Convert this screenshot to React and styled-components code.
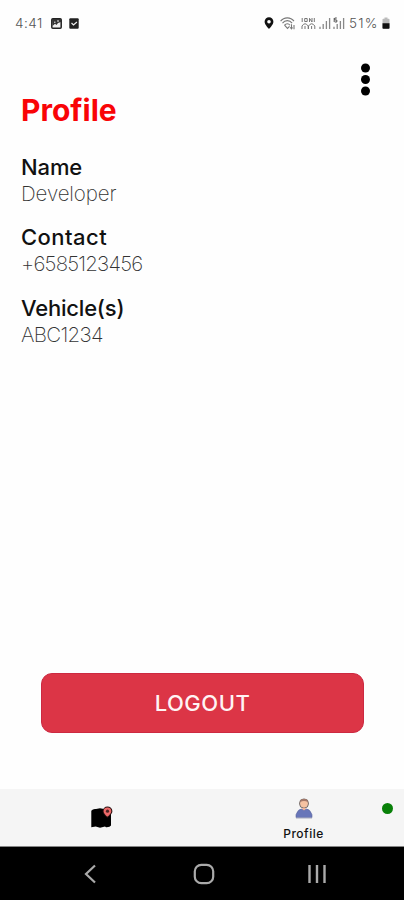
import React from "react";
import styled, { createGlobalStyle } from "styled-components";

const GlobalStyle = createGlobalStyle`
  * { box-sizing: border-box; }
  body { margin: 0; background: #fff; }
`;

const Screen = styled.div`
  width: 404px;
  height: 900px;
  display: flex;
  flex-direction: column;
  overflow: hidden;
  background: #fefefe;
  font-family: Inter, Roboto, sans-serif;
  color: #111;
`;

const StatusBar = styled.header`
  height: 46px;
  flex: none;
  display: flex;
  align-items: center;
  justify-content: space-between;
  padding: 0 14px 0 15px;
  font-size: 13.5px;
  font-weight: 300;
  color: #555;
`;

const StatusGroup = styled.div`
  display: flex;
  align-items: center;
`;

const StatusText = styled.span`
  width: ${(p) => p.$width}px;
  letter-spacing: ${(p) => p.$spacing}px;
  margin-right: ${(p) => p.$gap}px;
  white-space: nowrap;
`;

const Icon = styled.svg`
  display: block;
  flex: none;
  margin-right: ${(p) => p.$gap || 0}px;
`;

const Main = styled.main`
  flex: 1;
  display: flex;
  flex-direction: column;
  padding: 0 21px;
`;

const MenuButton = styled.button`
  align-self: flex-end;
  display: block;
  border: 0;
  padding: 0;
  margin: 17px 12px 0 0;
  height: 33px;
  background: none;
`;

const Title = styled.h1`
  margin: -4px 0 0;
  font-size: 30px;
  line-height: 36px;
  font-weight: 650;
  letter-spacing: 0;
  color: #f90406;
`;

const Fields = styled.dl`
  margin: 25.5px 0 0;
  display: flex;
  flex-direction: column;
  gap: 17.5px;
`;

const Field = styled.div`
  height: 53px;
`;

const Label = styled.dt`
  font-size: 22px;
  line-height: 27px;
  font-weight: 500;
  letter-spacing: ${(p) => p.$spacing}px;
`;

const Value = styled.dd`
  margin: 0;
  font-size: 20.5px;
  line-height: 26px;
  font-weight: 250;
  letter-spacing: ${(p) => p.$spacing}px;
  color: #333;
`;

const LogoutButton = styled.button`
  margin: auto 19px 56px 20px;
  height: 60px;
  border: 1px solid #cc2941;
  border-radius: 11px;
  background: #dc3546;
  color: #fff4f4;
  font: 550 22px/58px Inter, sans-serif;
  letter-spacing: 0.5px;
  padding: 0;
`;

const TabBar = styled.nav`
  flex: none;
  height: 58px;
  display: grid;
  grid-template-columns: 1fr 1fr;
  background: #f5f5f5;
  border-bottom: 1px solid #858585;
`;

const Tab = styled.div`
  position: relative;
  display: flex;
  flex-direction: column;
  align-items: center;
  padding-top: ${(p) => p.$top}px;
  padding-left: 1px;
`;

const TabLabel = styled.span`
  margin-top: 7px;
  font-size: 12px;
  line-height: 15px;
  font-weight: 500;
  letter-spacing: 0.5px;
  color: #111;
`;

const OnlineDot = styled.i`
  position: absolute;
  top: 14px;
  right: 11px;
  width: 11px;
  height: 11px;
  border-radius: 50%;
  background: #088008;
`;

const SystemNav = styled.footer`
  flex: none;
  height: 53px;
  display: flex;
  align-items: center;
  padding: 1px 0 0 83px;
  background: #000;
`;

const fields = [
  { label: "Name", value: "Developer", ls: -0.1, vs: -0.1 },
  { label: "Contact", value: "+6585123456", ls: 0.45, vs: -0.8 },
  { label: "Vehicle(s)", value: "ABC1234", ls: -0.2, vs: -0.7 },
];

function PictureIcon() {
  return (
    <Icon width="11" height="11" viewBox="0 0 11 11" $gap={7}>
      <rect x="0.8" y="0.8" width="9.4" height="9.4" rx="1" fill="#eee" stroke="#222" strokeWidth="1.5" />
      <path d="M1 1h9v3L7 5 5.5 7 4 5.8 1.5 8z" fill="#333" />
      <path d="M3 4.2h1.5M6 3h2" stroke="#eee" strokeWidth="1" />
    </Icon>
  );
}

function CheckIcon() {
  return (
    <Icon width="10" height="11" viewBox="0 0 10 11">
      <rect x="0.3" y="0.2" width="9.4" height="10.6" rx="1" fill="#222" />
      <path d="M2.5 5l2 2 3.4-3" fill="none" stroke="#eee" strokeWidth="1.2" />
    </Icon>
  );
}

function PinIcon() {
  return (
    <Icon width="10" height="12" viewBox="0 0 10 12" $gap={6}>
      <path d="M5 .3a4.4 4.4 0 0 0-4.4 4.4C.6 7.8 5 11.8 5 11.8s4.4-4 4.4-7.1A4.4 4.4 0 0 0 5 .3z" fill="#111" />
      <circle cx="5" cy="4.7" r="1.8" fill="#fff" />
    </Icon>
  );
}

function WifiIcon() {
  return (
    <Icon width="16" height="13" viewBox="0 0 16 13" $gap={5}>
      <g fill="none" stroke="#777" strokeWidth="1.1">
        <path d="M.6 4.2C4-.2 10.6-.2 14 4.2M2.5 6.2c2.6-3.4 7-3.4 9.6 0M4.6 8.2c1.5-2 4-2 5.4 0" />
        <path d="M4.5 8.2l3 3.2 2-2.1M11.5 7.3v4.2M14 8v4.2M10.3 10.3l1.2 1.5 1-1.4" />
      </g>
    </Icon>
  );
}

function CallIcon() {
  return (
    <Icon width="15" height="13" viewBox="0 0 15 13" $gap={3}>
      <g fill="none" stroke="#777" strokeWidth="1">
        <path d="M1.2 1v4M3.7 1.5h2.5v3H3.7zM8.5 5V1.3L11 5V1M13.3 1v4" />
        <path d="M1 12V9q3-4.5 6.2 0v3M4 9v3M7.5 12V9q3.2-4.5 6.3 0v3M10.6 9v3" />
      </g>
    </Icon>
  );
}

function SignalIcon({ data }) {
  return (
    <Icon width="12" height="12" viewBox="0 0 12 12" $gap={data ? 4 : 2}>
      <path d="M1 9.7V12M4.2 7V12M7.4 4V12M10.6 1V12" fill="none" stroke="#888" strokeWidth="1.3" />
      {data && <path d="M1.2 1v4M3.8 1h-2v2h2v2h-2" fill="none" stroke="#555" strokeWidth="1" />}
    </Icon>
  );
}

function BatteryIcon() {
  return (
    <Icon width="8" height="12" viewBox="0 0 8 12">
      <path d="M2.5 .5h3v1.3h1.2q.8 0 .8.8V11q0 .7-.8.7H1.3Q.5 11.7.5 11V2.6q0-.8.8-.8h1.2z" fill="#bbb" />
      <path d="M.5 6.2h7V11q0 .7-.8.7H1.3Q.5 11.7.5 11z" fill="#111" />
    </Icon>
  );
}

function MapIcon() {
  return (
    <Icon width="22" height="24" viewBox="0 0 22 24">
      <path d="M.3 4.7Q2 2.5 5 3l4-.8 4 .8 7 5v11.5q-1 2-5 1.8l-1-.9-5 1.3-4.3-1.2L.3 21.3z" fill="#000" />
      <path d="M16.4.5a4.8 4.8 0 0 0-4.8 4.8c0 3 4.8 6.6 4.8 6.6s5-3.6 5-6.6A4.9 4.9 0 0 0 16.4.5z" fill="#281111" />
      <path d="M16.4 1.5a3.8 3.8 0 0 0-3.8 3.9c0 2.2 3.8 5.2 3.8 5.2s3.9-3 3.9-5.2a3.9 3.9 0 0 0-3.9-3.9z" fill="#ed6969" />
      <circle cx="16.5" cy="5.2" r="1.6" fill="#4a2424" />
    </Icon>
  );
}

function PersonIcon() {
  return (
    <Icon width="18" height="21" viewBox="0 0 18 21">
      <rect x="4.6" y="1" width="8.8" height="9" rx="4" fill="#f5c2a2" stroke="#77706f" strokeWidth="1" />
      <path d="M5 4.2Q5 1 9 1t4 3.2Q9 2 5 4.2z" fill="#a37768" />
      <path d="M1 19.5v-2.8Q3 11 6.5 11L9 12.2 11.5 11Q15 11 17 16.7v2.8z" fill="#6876b9" stroke="#5a659c" strokeWidth=".6" />
      <path d="M6.8 10h4.4L9 12.5z" fill="#f1ad91" />
      <path d="M1 20.3h16" stroke="#c3c6d3" strokeWidth="1" />
    </Icon>
  );
}

export default function App() {
  return (
    <>
      <GlobalStyle />
      <Screen>
        <StatusBar>
          <StatusGroup>
            <StatusText $width={29} $spacing={0.5} $gap={7}>4:41</StatusText>
            <PictureIcon />
            <CheckIcon />
          </StatusGroup>
          <StatusGroup>
            <PinIcon />
            <WifiIcon />
            <CallIcon />
            <SignalIcon />
            <SignalIcon data />
            <StatusText $width={31} $spacing={1.2} $gap={2}>51%</StatusText>
            <BatteryIcon />
          </StatusGroup>
        </StatusBar>
        <Main>
          <MenuButton aria-label="More options">
            <Icon width="11" height="33" viewBox="0 0 11 33">
              <circle cx="5.5" cy="5" r="4.5" />
              <circle cx="5.5" cy="16.5" r="4.5" />
              <circle cx="5.5" cy="28" r="4.5" />
            </Icon>
          </MenuButton>
          <Title>Profile</Title>
          <Fields>
            {fields.map((f) => (
              <Field key={f.label}>
                <Label $spacing={f.ls}>{f.label}</Label>
                <Value $spacing={f.vs}>{f.value}</Value>
              </Field>
            ))}
          </Fields>
          <LogoutButton>LOGOUT</LogoutButton>
        </Main>
        <TabBar>
          <Tab $top={17}>
            <MapIcon />
          </Tab>
          <Tab $top={9}>
            <PersonIcon />
            <TabLabel>Profile</TabLabel>
            <OnlineDot />
          </Tab>
        </TabBar>
        <SystemNav>
          <Icon width="14" height="20" viewBox="0 0 14 20" $gap={96}>
            <path d="M12 1.5L3 10l9 8.5" fill="none" stroke="#aaa" strokeWidth="2.2" />
          </Icon>
          <Icon width="22" height="22" viewBox="0 0 22 22" $gap={92}>
            <rect x="1.8" y="1.8" width="18.4" height="18.4" rx="6.5" fill="none" stroke="#aaa" strokeWidth="2.2" />
          </Icon>
          <Icon width="20" height="20" viewBox="0 0 20 20">
            <path d="M2.5 1v18M10 1v18M17.5 1v18" stroke="#aaa" strokeWidth="2.4" />
          </Icon>
        </SystemNav>
      </Screen>
    </>
  );
}
